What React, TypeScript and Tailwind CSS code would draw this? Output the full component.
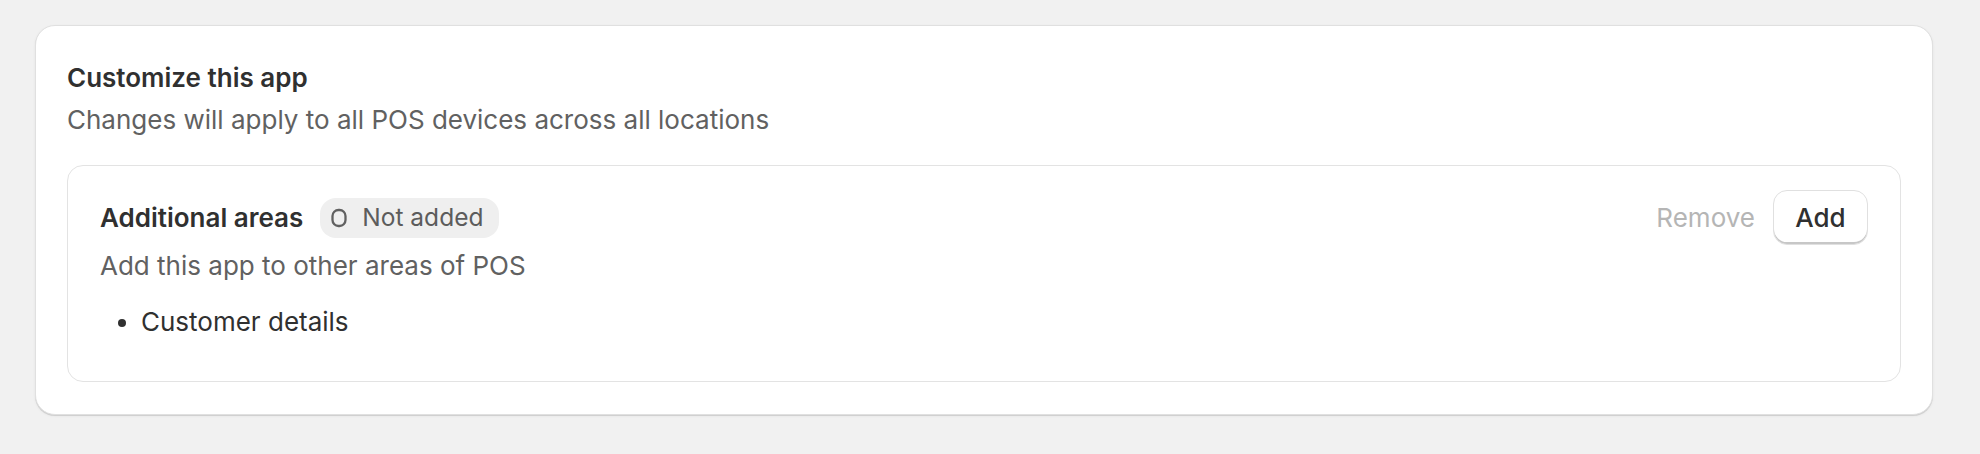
import React from "react";

export default function App() {
  return (
    <div
      className="min-h-[454px] w-full bg-[#f1f1f1] pt-[25px] pl-[35px]"
      style={{ fontFamily: "Inter, 'Noto Sans', sans-serif" }}
    >
      <div className="w-[1898px] rounded-[20px] border border-[#e0e0e0] bg-white px-[31px] pt-[31px] pb-[32px] shadow-[0_1px_0_0_rgba(0,0,0,0.1),0_1px_3px_0_rgba(0,0,0,0.06)]">
        <h2 className="text-[26px] leading-[42px] font-semibold text-[#303030]">Customize this app</h2>
        <p className="text-[26px] leading-[42px] text-[#616161]">Changes will apply to all POS devices across all locations</p>

        <div className="mt-[24px] rounded-[16px] border border-[#e3e3e3] px-[32px] pt-[24px] pb-[38px]">
          <div className="flex items-center justify-between">
            <div className="flex items-center gap-[17px]">
              <span className="text-[26px] leading-[42px] font-semibold text-[#303030]">Additional areas</span>
              <span className="flex h-[40px] items-center gap-[13px] rounded-[16px] bg-[#efefef] pl-[9px] pr-[16px] text-[24.5px] font-normal text-[#5c5c5c]">
                <svg width="20" height="22" viewBox="0 0 20 22" fill="none">
                  <rect x="3.5" y="3" width="13" height="16" rx="6" stroke="#616161" strokeWidth="2.3" />
                </svg>
                Not added
              </span>
            </div>
            <div className="flex items-center gap-[18px]">
              <span className="text-[26px] text-[#b5b5b5]">Remove</span>
              <button className="h-[55px] w-[95px] rounded-[14px] border border-[#e0e0e0] bg-white text-[26px] font-medium text-[#303030] shadow-[inset_0_-2px_0_0_#c7c7c7]">
                Add
              </button>
            </div>
          </div>
          <p className="text-[26px] leading-[42px] text-[#616161]">Add this app to other areas of POS</p>
          <ul className="mt-[14px] list-disc pl-[41px] text-[26px] leading-[42px] text-[#303030]">
            <li>Customer details</li>
          </ul>
        </div>
      </div>
    </div>
  );
}
